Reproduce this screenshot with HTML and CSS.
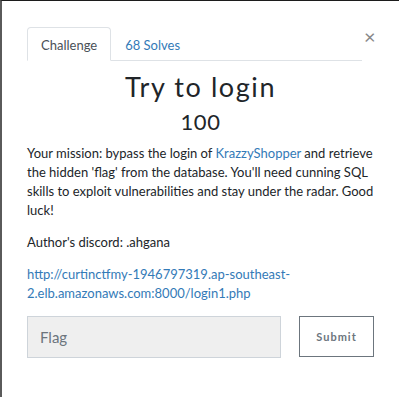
FILE: index.html
```html
<!DOCTYPE html>
<html lang="en">
<head>
    <meta charset="UTF-8">
    <title>Try to login</title>
    <link rel="stylesheet" href="styles.css">
</head>
<body>
    <div class="modal-body">
        <div class="modal-head">
            <ul class="nav-tabs">
                <li class="tab active">Challenge</li>
                <li class="tab">68 Solves</li>
            </ul>
            <button class="close" type="button">&times;</button>
        </div>

        <h2 class="challenge-name">Try to login</h2>
        <h3 class="challenge-value">100</h3>

        <div class="challenge-desc">
            <p>Your mission: bypass the login of <a href="#">KrazzyShopper</a> and retrieve the hidden 'flag' from the database. You'll need cunning SQL skills to exploit vulnerabilities and stay under the radar. Good luck!</p>
            <p>Author's discord: .ahgana</p>
            <p><a href="#">http://curtinctfmy-1946797319.ap-southeast-2.elb.amazonaws.com:8000/login1.php</a></p>
        </div>

        <form class="flag-form">
            <input type="text" class="flag-input" placeholder="Flag">
            <button type="submit" class="submit-btn">Submit</button>
        </form>
    </div>
</body>
</html>
```

FILE: styles.css
```css
* {
    margin: 0;
    padding: 0;
    box-sizing: border-box;
    font-family: 'Lato', sans-serif;
}

body {
    background: white;
    border-top: 1px solid #1c1c1c;
    border-left: 2px solid #5a5a5a;
    height: 397px;
    overflow: hidden;
}

.modal-body {
    padding: 26px 25px 0 25px;
}

.modal-head {
    display: flex;
    align-items: flex-start;
}

.nav-tabs {
    list-style: none;
    display: flex;
    flex: 1;
    border-bottom: 1px solid #dee2e6;
}

.tab {
    padding: 7px 13px 5px;
    font-size: 13px;
    line-height: 20px;
    color: #337ab7;
    border: 1px solid transparent;
    border-top-left-radius: 4px;
    border-top-right-radius: 4px;
    margin-bottom: -1px;
}

.tab.active {
    color: #495057;
    border-color: #dee2e6 #dee2e6 white;
    background: white;
}

.close {
    background: none;
    border: none;
    font-size: 20px;
    line-height: 20px;
    color: #888;
    margin: -1px 0 0 2px;
    width: 10px;
    cursor: pointer;
}

.challenge-name {
    text-align: center;
    font-size: 27px;
    font-weight: 400;
    line-height: 32px;
    color: #212529;
    margin-top: 10px;
    letter-spacing: 1.6px;
}

.challenge-value {
    text-align: center;
    font-size: 22px;
    font-weight: 400;
    line-height: 24px;
    color: #212529;
    margin-top: 7px;
    letter-spacing: 0.5px;
}

.challenge-desc {
    margin-top: 10px;
    font-size: 13px;
    line-height: 19px;
    color: #212529;
}

.challenge-desc p {
    margin-bottom: 13px;
}

.challenge-desc a {
    color: #337ab7;
    text-decoration: none;
    word-break: break-word;
}

.flag-form {
    display: flex;
    justify-content: space-between;
    margin-top: 10px;
}

.flag-input {
    width: 254px;
    height: 42px;
    padding: 0 12px;
    background: #efefef;
    border: 1px solid #ced4da;
    font-size: 15px;
    color: #495057;
}

.flag-input::placeholder {
    color: #6c757d;
}

.submit-btn {
    width: 75px;
    height: 41px;
    background: white;
    border: 1px solid #6c757d;
    color: #6c757d;
    font-size: 11px;
    font-weight: 700;
    letter-spacing: 1px;
    cursor: pointer;
}
```
